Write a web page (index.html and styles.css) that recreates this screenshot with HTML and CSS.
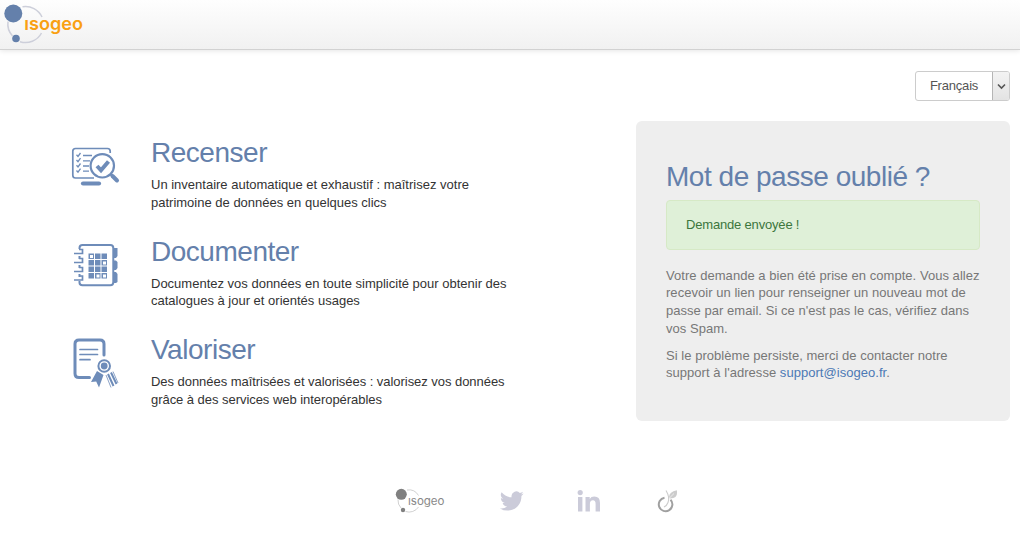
FILE: index.html
```html
<!DOCTYPE html>
<html lang="fr">
<head>
<meta charset="utf-8">
<title>Isogeo</title>
<link rel="stylesheet" href="styles.css">
</head>
<body>
<header class="topbar">
  <svg class="logo" width="90" height="49" viewBox="0 0 90 49">
    <path d="M22.500 6.800A18 18 0 0 1 42 17M8 21.500A18 18 0 0 0 12.500 36M20 41.700A18 18 0 0 0 41.500 33" fill="none" stroke="#cdcfda" stroke-width="1.500"/>
    <circle cx="13.300" cy="13.500" r="9" fill="#6480ab"/>
    <circle cx="16" cy="38.500" r="3.800" fill="#6480ab"/>
    <text class="logo-text" x="24.300" y="30" textLength="58.700" lengthAdjust="spacingAndGlyphs">ısogeo</text>
  </svg>
</header>
<div class="language">
  <button class="select"><span class="select-label">Français</span><span class="select-arrow"><svg width="9" height="7" viewBox="0 0 9 7"><path d="M1 1.500 4.500 5 8 1.500" fill="none" stroke="#555" stroke-width="1.600"/></svg></span></button>
</div>
<main class="main">
  <section class="features">
    <article class="feature">
      <svg class="icon" width="56" height="56" viewBox="68 138 56 56">
        <g fill="none" stroke="#6e8cb9">
          <path d="M94 178H75.500Q72.800 178 72.800 175.300V151.200Q72.800 148.500 75.500 148.500H107.500Q110.200 148.500 110.200 151.200V153" stroke-width="1.700"/>
          <path d="M83 155.500H92M83 160.800H90M83 166H89M83 171.200H89" stroke-width="1.300"/>
          <path d="M76.500 154.800 78 156.500 80.500 153M76.500 160 78 161.700 80.500 158.200M76.500 165.300 78 167 80.500 163.500M76.500 170.500 78 172.200 80.500 168.700" stroke-width="1.300"/>
          <path d="M83 183.500H99" stroke-width="4.200" stroke-linecap="round"/>
          <circle cx="102.300" cy="165.800" r="11.700" stroke-width="2.200"/>
          <path d="M97 166 101 170.300 108.500 161.500" stroke-width="4"/>
          <path d="M110.500 174 113 176.500" stroke-width="2.500"/>
          <path d="M112.500 176 117 180.500" stroke-width="4" stroke-linecap="round"/>
        </g>
      </svg>
      <div class="feature-body">
        <h2>Recenser</h2>
        <p>Un inventaire automatique et exhaustif : maîtrisez votre<br>patrimoine de données en quelques clics</p>
      </div>
    </article>
    <article class="feature">
      <svg class="icon" width="56" height="56" viewBox="68 237 56 56">
        <g fill="none" stroke="#6e8cb9" stroke-width="2">
          <path d="M79.500 249V248Q79.500 245 82.500 245H110.300Q113.300 245 113.300 248V282.300Q113.300 285.300 110.300 285.300H82.500Q79.500 285.300 79.500 282.500V281M79.500 256V259M79.500 265V268M79.500 274V277"/>
          <path d="M74 253.500H82.500V249.500H79M74 262.500H82.500V258.500H79M74 271.500H82.500V267.500H79M74 280H82.500V276H79" stroke-width="1.700"/>
        </g>
        <g fill="#6e8cb9">
          <path d="M114 248H117.500V256L116 258H114ZM114 260.500H116L117.500 262V268L116 270H114ZM114 272H116L117.500 274V282L116 283H114Z"/>
          <path d="M88.500 253.500H94V259H88.500ZM95 253.500H100.500V259H95ZM101.500 253.500H107V259H101.500ZM88.500 260H94V265.500H88.500ZM95 260H100.500V265.500H95ZM101.500 260H107V265.500H101.500ZM88.500 266.500H94V272H88.500ZM95 266.500H100.500V272H95ZM101.500 266.500H107V272H101.500ZM88.500 273H94V278.500H88.500ZM95 273H100.500V278.500H95ZM101.500 273H107V278.500H101.500Z"/>
        </g>
        <path d="M90 255H93V258H90ZM103 261.500H106V264.500H103ZM96.500 274.500H99.500V277.500H96.500ZM103 274.500H106V277.500H103Z" fill="#fff"/>
      </svg>
      <div class="feature-body">
        <h2>Documenter</h2>
        <p>Documentez vos données en toute simplicité pour obtenir des<br>catalogues à jour et orientés usages</p>
      </div>
    </article>
    <article class="feature">
      <svg class="icon" width="56" height="56" viewBox="68 335 56 56">
        <g fill="none" stroke="#6e8cb9">
          <path d="M89.500 377.500H79Q75 377.500 75 373.500V344Q75 340 79 340H100Q104 340 104 344V355" stroke-width="3"  stroke-linecap="round"/>
          <path d="M80 349.500H97.500M80 354.500H97.500M80 359.700H90" stroke-width="1.700" stroke-linecap="round"/>
          <circle cx="104.200" cy="366" r="5.800" stroke-width="2"/>
          <path d="M108 374 113.500 386M111 372.500 116.500 384" stroke-width="2"/>
          <path d="M106 375 111 387.500M113 371.500 118 383" stroke-width=".8"/>
        </g>
        <circle cx="104.200" cy="366" r="3.400" fill="#6e8cb9"/>
        <path d="M97 371 91 382 96.200 381.500 99 387.500 103.500 375Z" fill="#6e8cb9"/>
      </svg>
      <div class="feature-body">
        <h2>Valoriser</h2>
        <p><span class="snug">Des données maîtrisées et valorisées : valorisez vos données</span><br><span class="snug">grâce à des services web interopérables</span></p>
      </div>
    </article>
  </section>
  <section class="panel">
    <h2>Mot de passe oublié ?</h2>
    <div class="alert">Demande envoyée !</div>
    <p>Votre demande a bien été prise en compte. Vous allez<br>recevoir un lien pour renseigner un nouveau mot de<br>passe par email. Si ce n'est pas le cas, vérifiez dans<br>vos Spam.</p>
    <p>Si le problème persiste, merci de contacter notre<br>support à l'adresse <a class="link">support@isogeo.fr</a>.</p>
  </section>
</main>
<footer class="footer">
  <svg width="52" height="28" viewBox="394 487 52 28">
    <path d="M407 490A11.300 11.300 0 0 1 418.500 495.500M398 499.500A11.300 11.300 0 0 0 401 508M405.500 511.500A11.300 11.300 0 0 0 418.500 507" fill="none" stroke="#ccc" stroke-width=".9"/>
    <circle cx="401.300" cy="494.300" r="5.500" fill="#808080"/>
    <circle cx="403" cy="510" r="2.200" fill="#808080"/>
    <text class="logo-small" x="408" y="504.500" textLength="36.500" lengthAdjust="spacingAndGlyphs">ısogeo</text>
  </svg>
  <svg width="24" height="20" viewBox="0 0 24 20"><path transform="translate(0 -2)" fill="#cbcbd9" d="M23.600 4.600a9.600 9.600 0 0 1-2.800.8A4.800 4.800 0 0 0 23 2.700a9.700 9.700 0 0 1-3.100 1.200 4.900 4.900 0 0 0-8.300 4.400A13.800 13.800 0 0 1 1.600 3.200a4.900 4.900 0 0 0 1.500 6.500 4.800 4.800 0 0 1-2.200-.6 4.900 4.900 0 0 0 3.900 4.800 4.900 4.900 0 0 1-2.200.1 4.900 4.900 0 0 0 4.600 3.400A9.800 9.800 0 0 1 0 19.400a13.800 13.800 0 0 0 7.500 2.200c9 0 14.200-7.600 13.900-14.500a9.900 9.900 0 0 0 2.200-2.500z"/></svg>
  <svg width="24" height="22" viewBox="0 0 24 22"><g fill="#cbcbd9"><circle cx="3.200" cy="2.600" r="2.600"/><path d="M1 7H5.400V21.500H1ZM8.500 7H12.700V9Q14 6.600 17.300 6.600 23 6.600 23 13V21.500H18.600V14Q18.600 10.300 16 10.300 12.900 10.300 12.900 14V21.500H8.500Z"/></g></svg>
  <svg width="22" height="24" viewBox="656 489 22 24"><path d="M664.500 497.700A6.800 6.800 0 1 0 670.500 499.700" fill="none" stroke="#a0a0a0" stroke-width="2"/><path d="M666 490.500Q670 497 668 502.500 667 505.500 664 507" fill="none" stroke="#ccc" stroke-width="1.100"/><path d="M669.500 498.500Q667.500 492.500 676.800 490.300 678.500 499 669.500 498.500Z" fill="#ccc"/><path d="M669.300 498.200 674 493.500" stroke="#fff" stroke-width=".6"/></svg>
</footer>
</body>
</html>
```

FILE: styles.css
```css
* { box-sizing: border-box; }
body { margin: 0; background: #fff; color: #333; font: 13px/17.8px "Liberation Sans", Arial, sans-serif; }
h2, p { margin: 0; }
svg { display: block; flex: none; }
.topbar { height: 50px; background: linear-gradient(#fefefe, #f1f1f1); border-bottom: 1px solid #d2d2d2; box-shadow: 0 1px 5px rgba(0,0,0,.1); }
.logo-text { font: 600 18px Inter, sans-serif; fill: #f9a012; }
.logo-small { font: 400 11px Inter, sans-serif; fill: #888; }
.language { display: flex; justify-content: flex-end; padding: 21px 10px 0; }
.select { display: flex; width: 95px; height: 30px; padding: 0; background: #fff; border: 1px solid #ccc; border-radius: 3px; font: 13px "Liberation Sans", Arial, sans-serif; letter-spacing: -.2px; color: #555; overflow: hidden; }
.select-label { flex: 1; line-height: 28px; text-align: center; }
.select-arrow { display: flex; align-items: center; justify-content: center; width: 17px; height: 28px; border-left: 1px solid #b5b5b5; background: linear-gradient(#f3f3f3, #e3e3e3); }
.main { display: flex; justify-content: space-between; padding: 20px 10px 0 68px; }
.features { display: flex; flex-direction: column; height: 300px; padding-top: 17px; }
.feature { display: flex; gap: 27px; height: 98.500px; flex: none; }
.feature-body h2, .panel h2 { font-size: 28px; font-weight: 400; line-height: 30px; letter-spacing: -.48px; color: #6480ab; }
.feature-body p { margin-top: 8px; white-space: nowrap; }
.snug { letter-spacing: -.045px; }
.panel { width: 374px; height: 300px; padding: 41px 30px 0; border-radius: 6px; background: #eee; color: #777; white-space: nowrap; }
.alert { height: 50px; margin: 8px 0 16.500px; padding: 15px 19px; background: #dff0d8; border: 1px solid #d6e9c6; border-radius: 4px; letter-spacing: -.18px; color: #3c763d; }
.panel p { letter-spacing: .04px; }
.panel p + p { margin-top: 9px; }
.link { color: #4c79b5; }
.footer { display: flex; align-items: center; padding: 66px 0 0 394px; }
.footer svg:nth-child(2) { margin-left: 54px; }
.footer svg:nth-child(3) { margin-left: 53px; }
.footer svg:nth-child(4) { margin-left: 55px; }
```
